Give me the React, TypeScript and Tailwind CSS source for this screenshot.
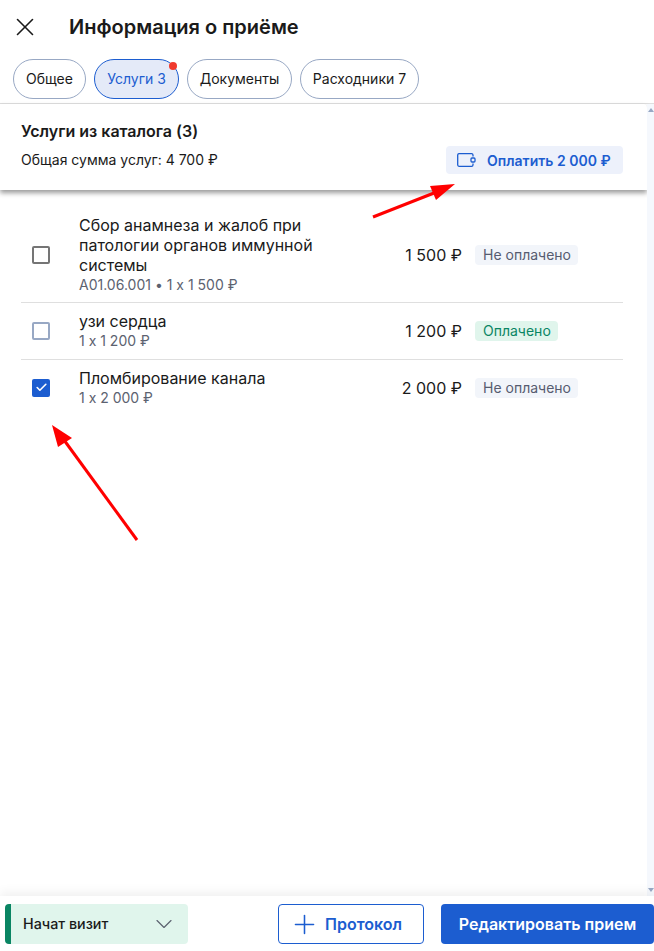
import { Check, ChevronDown, Plus, X } from "lucide-react";

const tabs = [
  { label: "Общее", width: "w-[73px]" },
  { label: "Услуги 3", width: "w-[85px]", active: true },
  { label: "Документы", width: "w-[105px]" },
  { label: "Расходники 7", width: "w-[119px]" },
];

const services = [
  {
    name: "Сбор анамнеза и жалоб при патологии органов иммунной системы",
    meta: "A01.06.001 • 1 x 1 500 ₽",
    price: "1 500 ₽",
    paid: false,
    box: "dark",
  },
  { name: "узи сердца", meta: "1 x 1 200 ₽", price: "1 200 ₽", paid: true, box: "light" },
  { name: "Пломбирование канала", meta: "1 x 2 000 ₽", price: "2 000 ₽", paid: false, box: "checked" },
];

function CheckBox({ kind }: { kind: string }) {
  if (kind === "checked") {
    return (
      <div className="flex h-[18px] w-[18px] items-center justify-center rounded-[2px] bg-[#1c5dd0]">
        <Check className="h-[13px] w-[13px] text-white" strokeWidth={3} />
      </div>
    );
  }
  return (
    <div
      className={`h-[18px] w-[18px] rounded-[2px] border-2 ${
        kind === "dark" ? "border-[#757575]" : "border-[#98a8c4]"
      }`}
    />
  );
}

export default function App() {
  return (
    <div className="relative flex h-[951px] w-[654px] flex-col overflow-hidden bg-white font-['Inter',sans-serif] text-[#1a1a1a] [font-feature-settings:'calt'_0]">
      {/* Шапка */}
      <div className="flex h-[59px] items-center pb-[5px] pl-[10px]">
        <X className="h-[30px] w-[30px]" strokeWidth={1.3} />
        <h1 className="ml-[29px] text-[20px] font-semibold">Информация о приёме</h1>
      </div>

      {/* Табы */}
      <div className="flex h-[45px] gap-2 border-b border-[#dfdfdf] pl-[13px]">
        {tabs.map((t) => (
          <div
            key={t.label}
            className={`relative flex h-[40px] items-center justify-center rounded-full border pb-[1px] text-[14px] ${t.width} ${
              t.active ? "border-[#1c5dd0] bg-[#e4eaf8] text-[#1c5dd0]" : "border-[#98a8c4]"
            }`}
          >
            {t.label}
            {t.active && <span className="absolute right-[1px] top-[2px] h-[8px] w-[8px] rounded-full bg-[#f03a2e]" />}
          </div>
        ))}
      </div>

      <div className="flex min-h-0 flex-1">
        <div className="min-w-0 flex-1">
          {/* Карточка итога */}
          <div className="flex h-[86px] items-end justify-between rounded-tr-[4px] bg-white pb-[16px] pl-[21px] pr-[24px] shadow-[0_3px_5px_rgba(0,0,0,0.4)]">
            <div className="mb-[4px]">
              <div className="text-[16px] font-semibold leading-[20px]">Услуги из каталога (3)</div>
              <div className="mt-[9px] text-[14px] leading-[20px]">Общая сумма услуг: 4 700 ₽</div>
            </div>
            <button className="flex h-[28px] w-[177px] items-center rounded-[4px] bg-[#edf1fb] pl-[11px] text-[14px] font-semibold text-[#1c5dd0]">
              <svg className="h-[14px] w-[19px]" viewBox="0 0 19 14" fill="none" stroke="#1c5dd0" strokeWidth="1.3">
                <path d="M16 3.500V2A1.400 1.400 0 0 0 14.600 0.700H2A1.400 1.400 0 0 0 0.700 2v10A1.400 1.400 0 0 0 2 13.300h12.600A1.400 1.400 0 0 0 16 12v-1.500" />
                <rect x="14" y="5" width="4" height="4" rx="1" />
              </svg>
              <span className="ml-[11px]">Оплатить 2 000 ₽</span>
            </button>
          </div>

          {/* Список услуг */}
          <div className="ml-[21px] mr-[24px] mt-[25px]">
            {services.map((s, i) => (
              <div
                key={s.name}
                className={`flex items-center ${i < services.length - 1 ? "border-b border-[#dfdfdf]" : ""} ${
                  i === 0 ? "pb-[8px]" : "pb-[9px] pt-[8px]"
                }`}
              >
                <div className="ml-[11px] w-[47px] shrink-0">
                  <CheckBox kind={s.box} />
                </div>
                <div className="w-[240px] shrink-0">
                  <div className="text-[16px] leading-[20px]">{s.name}</div>
                  <div className="text-[14px] leading-[19px] text-[#5c6270]">{s.meta}</div>
                </div>
                <div className="w-[143px] shrink-0 text-right text-[16px]">{s.price}</div>
                <div
                  className={`ml-[13px] flex h-[20px] items-center rounded-[4px] pl-[8px] pr-[7px] text-[14px] ${
                    s.paid ? "bg-[#e0f5ec] text-[#0a8563]" : "bg-[#f2f5fa] text-[#565c70]"
                  }`}
                >
                  {s.paid ? "Оплачено" : "Не оплачено"}
                </div>
              </div>
            ))}
          </div>
        </div>

        {/* Скроллбар */}
        <div className="flex w-[7px] shrink-0 flex-col items-center justify-between bg-[#f5f8fd] py-[4px]">
          <div className="h-0 w-0 border-x-[3px] border-b-[4px] border-x-transparent border-b-[#98a8c4]" />
          <div className="h-0 w-0 border-x-[3px] border-t-[4px] border-x-transparent border-t-[#98a8c4]" />
        </div>
      </div>

      {/* Футер */}
      <div className="relative flex h-[55px] items-start bg-white pl-[5px] pt-[8px] shadow-[0_-4px_10px_rgba(0,0,0,0.06)]">
        <div className="flex h-[40px] w-[183px] items-center justify-between rounded-[4px] border-l-[6px] border-[#0a8563] bg-[#e0f5ec] pl-[12px] pr-[10px]">
          <span className="text-[14.300px] font-medium">Начат визит</span>
          <ChevronDown className="h-[28px] w-[28px] text-[#5c6270]" strokeWidth={1} />
        </div>
        <button className="ml-[90px] flex h-[40px] w-[146px] items-center rounded-[4px] border border-[#1c5dd0] pl-[10px] text-[16px] font-semibold text-[#1c5dd0]">
          <Plus className="h-[31px] w-[31px]" strokeWidth={1.2} />
          <span className="ml-[5px]">Протокол</span>
        </button>
        <button className="ml-[17px] flex h-[40px] flex-1 items-center justify-center rounded-[4px] bg-[#1c5dd0] text-[16px] font-semibold text-white">
          Редактировать прием
        </button>
      </div>

      {/* Стрелки-пометки */}
      <svg className="absolute left-[42px] top-[420px] h-[130px] w-[100px]" viewBox="0 0 100 130" fill="none">
        <line x1="95" y1="120" x2="22" y2="20" stroke="#ff0000" strokeWidth="3" />
        <polygon points="10,5 30,18 16,27" fill="#ff0000" />
      </svg>
      <svg className="absolute left-[370px] top-[180px] h-[40px] w-[90px]" viewBox="0 0 90 40" fill="none">
        <line x1="3" y1="37" x2="64" y2="13" stroke="#ff0000" strokeWidth="3" />
        <polygon points="85,4 60,6 66,20" fill="#ff0000" />
      </svg>
    </div>
  );
}
